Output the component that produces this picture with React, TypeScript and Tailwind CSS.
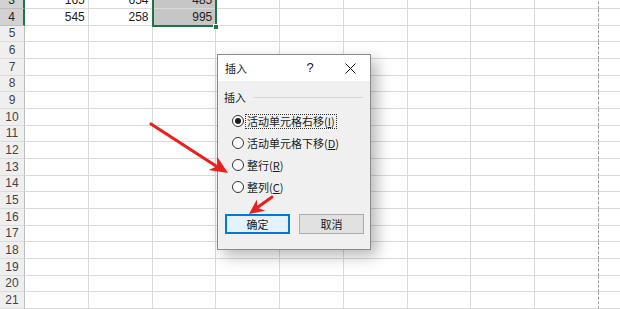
import React from "react";

const rows = Array.from({ length: 19 }, (_, i) => i + 3);
const cols = [0, 1, 2, 3, 4, 5, 6, 7, 8];

const data: Record<number, string[]> = {
  3: ["165", "654", "485"],
  4: ["545", "258", "995"],
};

const arrowHead = (x1: number, y1: number, x2: number, y2: number, len: number, half: number) => {
  const dx = x2 - x1;
  const dy = y2 - y1;
  const d = Math.hypot(dx, dy);
  const ux = dx / d;
  const uy = dy / d;
  const bx = x2 - ux * len;
  const by = y2 - uy * len;
  const cx = x2 - ux * len * 0.7;
  const cy = y2 - uy * len * 0.7;
  return `${x2},${y2} ${bx - uy * half},${by + ux * half} ${cx},${cy} ${bx + uy * half},${by - ux * half}`;
};

const Radio = ({ checked, label, focus }: { checked?: boolean; label: React.ReactNode; focus?: boolean }) => (
  <div className="flex h-[16px] items-center whitespace-nowrap">
    <span className="flex h-[12px] w-[12px] shrink-0 items-center justify-center rounded-full border border-[#333] bg-white">
      {checked && <span className="h-[6px] w-[6px] rounded-full bg-[#1a1a1a]" />}
    </span>
    <span
      className={
        focus
          ? "ml-[1px] border border-dotted border-[#333] px-[1px] leading-[13px]"
          : "ml-[3px] leading-[13px]"
      }
    >
      {label}
    </span>
  </div>
);

const App = () => {
  return (
    <div
      className="relative h-[309px] w-[620px] overflow-hidden bg-white"
      style={{ fontFamily: '"Liberation Sans", "Noto Sans CJK SC", sans-serif' }}
    >
      {/* sheet */}
      <div className="-mt-[7.67px] flex flex-col">
        {rows.map((r) => {
          const sel = r === 3 || r === 4;
          return (
            <div key={r} className="flex h-[16.67px]">
              <div
                className={
                  sel
                    ? "flex w-[25px] shrink-0 items-center justify-center border-b border-r-2 border-b-[#bdbdbd] border-r-[#217346] bg-[#d2d2d2] text-[12px] text-[#262626]"
                    : "flex w-[25px] shrink-0 items-center justify-center border-b border-r border-b-[#dcdcdc] border-r-[#bdbdbd] bg-[#efefef] text-[12px] text-[#444]"
                }
              >
                {r}
              </div>
              {cols.map((c) => (
                <div
                  key={c}
                  className={
                    (c === 8
                      ? "border-r-[#a0a0a0] [border-right-style:dashed] "
                      : "border-r-[#dadada] ") +
                    (sel && c === 2 ? "bg-[#c6c6c6] " : "") +
                    "flex w-[63.75px] shrink-0 items-center justify-end border-b border-r border-b-[#dadada] pr-[3px] text-[12px] text-[#222]"
                  }
                >
                  {data[r] && c < 3 ? data[r][c] : ""}
                </div>
              ))}
              <div className="flex-1 border-b border-b-[#dadada]" />
            </div>
          );
        })}
      </div>

      {/* selection outline */}
      <div className="absolute left-[151.5px] top-[-8px] h-[35px] w-[65px] border-2 border-[#217346]" />
      <div className="absolute left-[213px] top-[24px] h-[6px] w-[6px] border border-white bg-[#217346]" />

      {/* dialog */}
      <div
        className="absolute left-[217px] top-[54px] flex h-[196px] w-[154px] flex-col border border-[#8a8a8a] bg-[#f0f0f0] text-[11px] text-[#1a1a1a] shadow-[6px_6px_14px_rgba(0,0,0,0.28)]"
        style={{ fontFamily: '"Noto Sans CJK SC", "Liberation Sans", sans-serif' }}
      >
        <div className="flex h-[26px] shrink-0 items-center whitespace-nowrap bg-white pl-[7px]">
          <span className="flex-1">插入</span>
          <span
            className="w-[20px] text-center text-[13px]"
            style={{ fontFamily: '"Liberation Sans", sans-serif' }}
          >
            ?
          </span>
          <span className="ml-[10px] flex w-[40px] justify-center">
            <svg width="11" height="11" viewBox="0 0 11 11">
              <path d="M0.5 0.5 L10.5 10.5 M10.5 0.5 L0.5 10.5" stroke="#1a1a1a" strokeWidth="1" />
            </svg>
          </span>
        </div>
        <div className="flex flex-1 flex-col px-[6px] pb-[15px] pt-[8px]">
          <div className="flex h-[16px] items-center whitespace-nowrap">
            <span>插入</span>
            <div className="ml-[8px] mr-[1px] h-px flex-1 bg-[#d5d5d5]" />
          </div>
          <div className="mt-[8px] flex flex-col gap-[6px] pl-[8px]">
            <Radio
              checked
              focus
              label={
                <>
                  活动单元格右移(<span className="underline">I</span>)
                </>
              }
            />
            <Radio
              label={
                <>
                  活动单元格下移(<span className="underline">D</span>)
                </>
              }
            />
            <Radio
              label={
                <>
                  整行(<span className="underline">R</span>)
                </>
              }
            />
            <Radio
              label={
                <>
                  整列(<span className="underline">C</span>)
                </>
              }
            />
          </div>
          <div className="mt-auto flex gap-[9px] pl-[1px]">
            <div className="flex h-[20px] w-[65px] items-center justify-center border-2 border-[#0078d7] bg-[#e5f1fb]">
              确定
            </div>
            <div className="flex h-[20px] w-[65px] items-center justify-center border border-[#adadad] bg-[#e1e1e1]">
              取消
            </div>
          </div>
        </div>
      </div>

      {/* arrows */}
      <svg className="pointer-events-none absolute left-0 top-0" width="620" height="309">
        <line x1="151" y1="124" x2="216" y2="166" stroke="#e8201e" strokeWidth="3.2" strokeLinecap="round" />
        <polygon points={arrowHead(151, 124, 228, 173, 18, 8)} fill="#e8201e" />
        <line x1="272" y1="197" x2="258" y2="207" stroke="#e8201e" strokeWidth="3" strokeLinecap="round" />
        <polygon points={arrowHead(272, 197, 249, 214, 15, 7)} fill="#e8201e" />
      </svg>
    </div>
  );
};

export default App;
